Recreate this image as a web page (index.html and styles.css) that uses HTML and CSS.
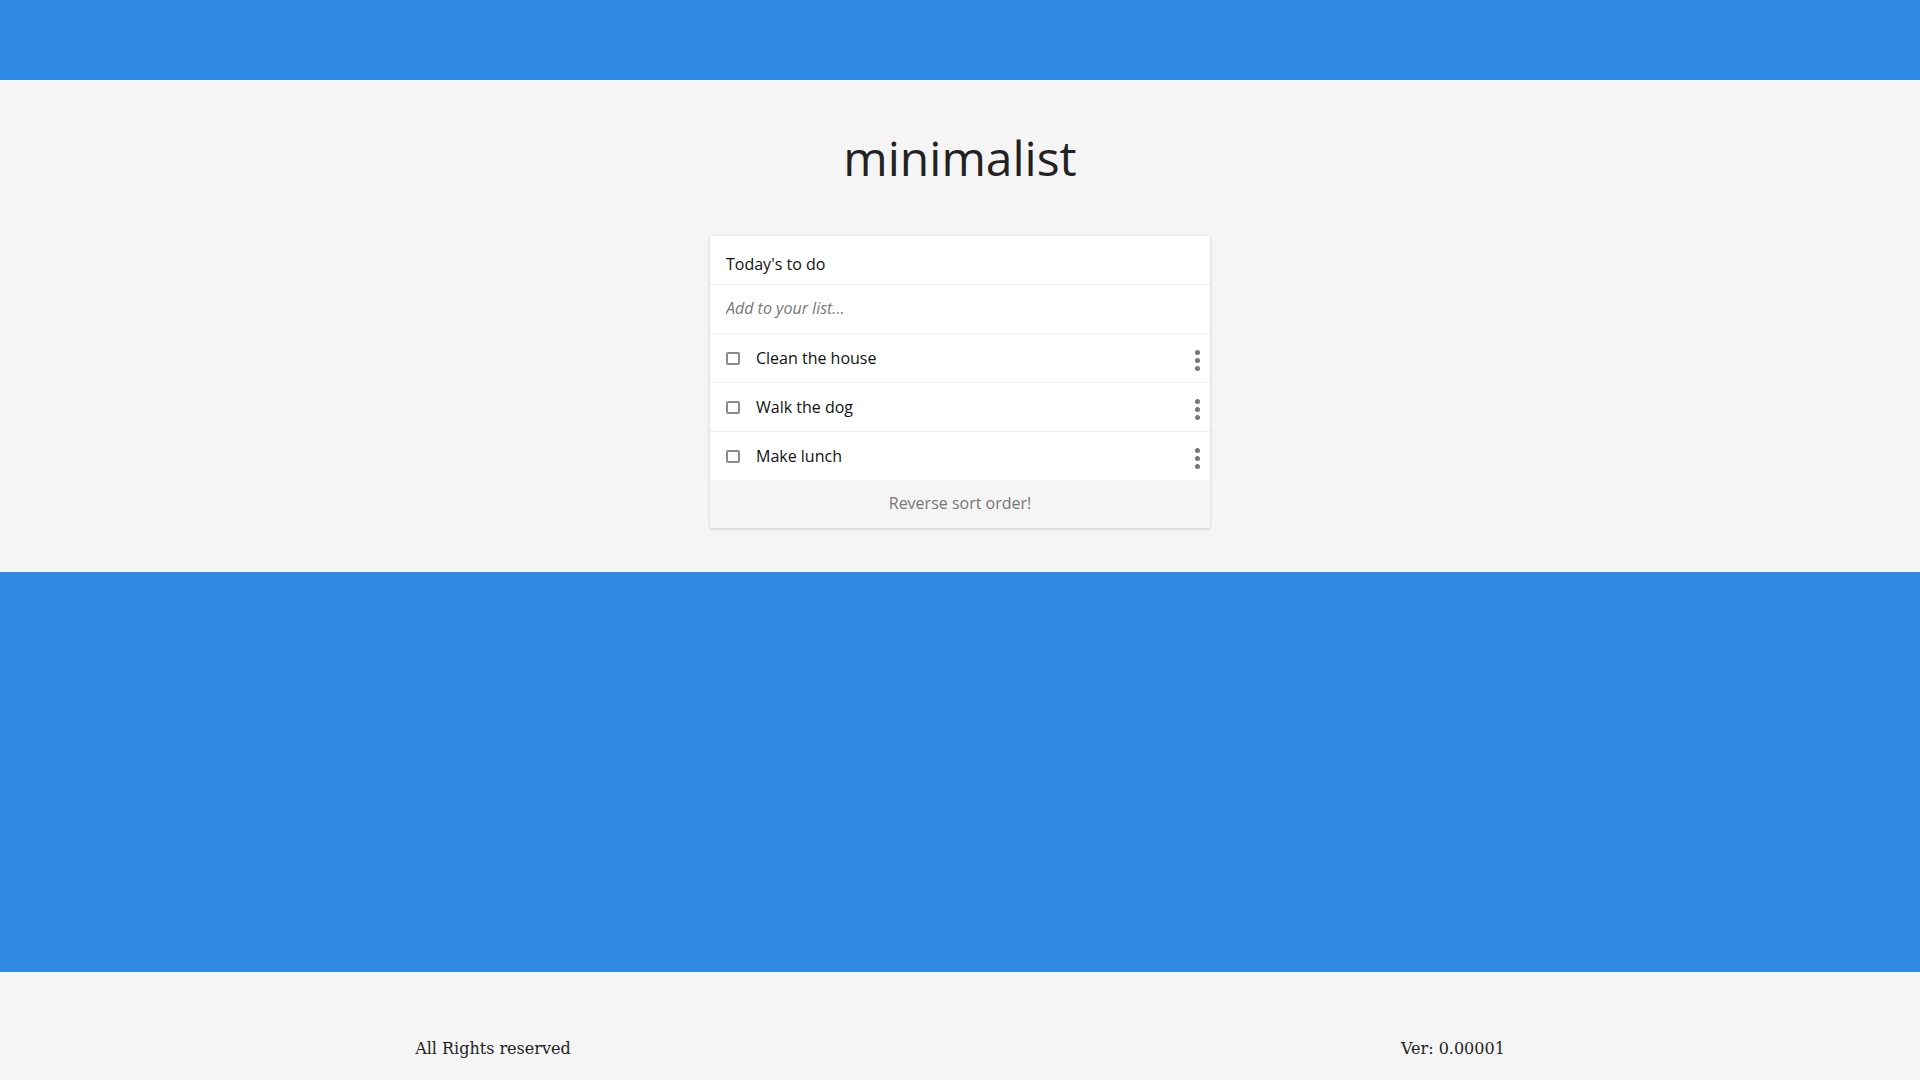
FILE: index.html
```html
<!DOCTYPE html>
<html lang="en">
<head>
<meta charset="utf-8">
<title>minimalist</title>
<link rel="stylesheet" href="styles.css">
</head>
<body>
<header class="topbar"></header>
<main class="main">
  <h1 class="title">minimalist</h1>
  <section class="card">
    <div class="card-head">Today's to do</div>
    <div class="card-input"><input class="add" type="text" placeholder="Add to your list..."></div>
    <ul class="items">
      <li class="item"><span class="check"></span><span class="label">Clean the house</span><span class="dots"><i></i><i></i><i></i></span></li>
      <li class="item"><span class="check"></span><span class="label">Walk the dog</span><span class="dots"><i></i><i></i><i></i></span></li>
      <li class="item"><span class="check"></span><span class="label">Make lunch</span><span class="dots"><i></i><i></i><i></i></span></li>
    </ul>
    <div class="card-foot">Reverse sort order!</div>
  </section>
</main>
<div class="band"></div>
<footer class="footer">
  <span>All Rights reserved</span>
  <span>Ver: 0.00001</span>
</footer>
</body>
</html>
```
FILE: styles.css
```css
* { box-sizing: border-box; }
html, body { margin: 0; padding: 0; }
body {
  background: #f5f5f5;
  font-family: "DejaVu Serif", serif;
}
.topbar {
  height: 80px;
  background: #2f8ae5;
}
.main {
  display: flex;
  flex-direction: column;
  align-items: center;
  padding: 45px 0 44px;
  font-family: "Open Sans", sans-serif;
}
.title {
  margin: 0 0 46px;
  font-size: 48px;
  font-weight: 400;
  line-height: 65px;
  color: #222;
}
.card {
  width: 500px;
  background: #fff;
  box-shadow: 0 1px 3px rgba(0,0,0,0.18);
}
.card-head {
  height: 49px;
  padding: 7px 16px 0;
  display: flex;
  align-items: center;
  font-size: 16px;
  color: #111;
  border-bottom: 1px solid #eee;
}
.card-input {
  height: 49px;
  border-bottom: 1px solid #eee;
  display: flex;
  align-items: center;
  padding: 0 16px 2px;
}
.add {
  border: 0;
  outline: none;
  width: 100%;
  font-family: "Open Sans", sans-serif;
  font-size: 16px;
  font-style: italic;
  background: transparent;
  padding: 0;
}
.add::placeholder { color: #777; }
.items { list-style: none; margin: 0; padding: 0; }
.item {
  height: 49px;
  display: flex;
  align-items: center;
  padding: 0 10px 0 16px;
  border-bottom: 1px solid #eee;
  font-size: 16px;
  color: #111;
}
.item:last-child { height: 48px; border-bottom: 0; }
.check {
  flex: none;
  width: 14px;
  height: 13px;
  margin-right: 16px;
  border: 2px solid #8b8a93;
  border-radius: 2px;
  background: #fff;
}
.label { flex: 1; }
.dots {
  display: flex;
  flex-direction: column;
  gap: 3px;
  margin-top: 4px;
}
.dots i {
  display: block;
  width: 5px;
  height: 5px;
  border-radius: 50%;
  background: #777;
}
.card-foot {
  height: 48px;
  padding-bottom: 2px;
  background: #f5f5f5;
  display: flex;
  align-items: center;
  justify-content: center;
  font-size: 16px;
  color: #777;
}
.band {
  height: 400px;
  background: #2f8ae5;
}
.footer {
  display: flex;
  justify-content: space-around;
  padding: 67px 0 0;
  font-size: 16px;
  color: #222;
}
```
